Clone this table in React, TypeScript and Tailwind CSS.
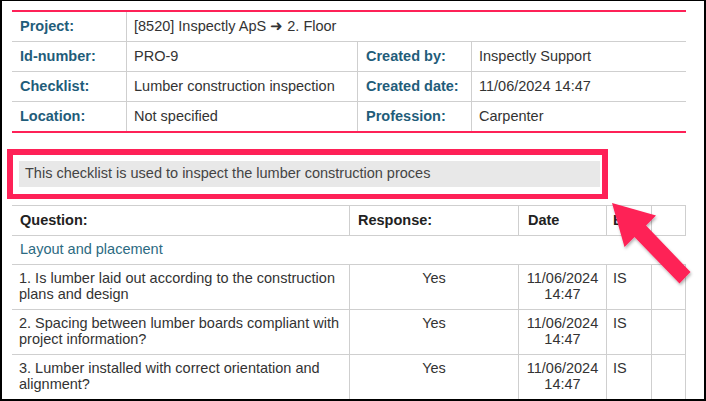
const infoRows = [
  { label: 'Id-number:', value: 'PRO-9', label2: 'Created by:', value2: 'Inspectly Support' },
  { label: 'Checklist:', value: 'Lumber construction inspection', label2: 'Created date:', value2: '11/06/2024 14:47' },
  { label: 'Location:', value: 'Not specified', label2: 'Profession:', value2: 'Carpenter' },
];

const questions = [
  ['1. Is lumber laid out according to the construction', 'plans and design'],
  ['2. Spacing between lumber boards compliant with', 'project information?'],
  ['3. Lumber installed with correct orientation and', 'alignment?'],
];

function Arrow() {
  return (
    <svg
      className="pointer-events-none absolute left-0 top-0"
      width="706"
      height="401"
      viewBox="0 0 706 401"
    >
      <defs>
        <filter id="shadow" x="-20%" y="-20%" width="140%" height="140%">
          <feDropShadow dx="1" dy="2" stdDeviation="1.5" floodColor="#000" floodOpacity="0.3" />
        </filter>
      </defs>
      <polygon
        points="610,202 654,214.5 644,224.5 688.5,271 677.5,282.5 632.5,236 622.5,246"
        fill="#fe2157"
        filter="url(#shadow)"
      />
    </svg>
  );
}

export default function App() {
  return (
    <div
      className="relative h-[401px] w-[706px] overflow-hidden border-b-2 border-l-2 border-r-2 border-t border-black bg-white"
      style={{ fontFamily: '"Liberation Sans", Arial, sans-serif' }}
    >
      <div className="pl-[10px] pt-[9px] text-[14.5px] text-[#333]">
        {/* info table */}
        <div className="w-[674px] border-b-2 border-t-2 border-[#fe2157]">
          <div className="flex h-[30px] border-b border-[#cfcfcf]">
            <div className="flex w-[115px] items-center border-r border-[#cfcfcf] pl-2 font-bold text-[#1f5d7a]">
              Project:
            </div>
            <div className="flex flex-1 items-center pl-[7px]">[8520] Inspectly ApS ➜ 2. Floor</div>
          </div>
          {infoRows.map((row, i) => (
            <div
              key={row.label}
              className={`flex h-[29px] ${i < infoRows.length - 1 ? 'h-[30px] border-b border-[#cfcfcf]' : ''}`}
            >
              <div className="flex w-[115px] items-center border-r border-[#cfcfcf] pl-2 font-bold text-[#1f5d7a]">
                {row.label}
              </div>
              <div className="flex w-[231px] items-center border-r border-[#cfcfcf] pl-[7px]">{row.value}</div>
              <div className="flex w-[114px] items-center border-r border-[#cfcfcf] pl-[8px] font-bold text-[#1f5d7a]">
                {row.label2}
              </div>
              <div className="flex flex-1 items-center pl-[7px]">{row.value2}</div>
            </div>
          ))}
        </div>

        {/* description, highlighted */}
        <div className="ml-[-5px] mt-[16px] w-[601px] border-[6px] border-b-[5px] border-r-[6px] border-[#fe2157] pb-[7px] pl-[6px] pr-[2px] pt-[6px]">
          <div className="flex h-[26px] items-center bg-[#e8e8e8] pl-[6px] text-[#444]">
            This checklist is used to inspect the lumber construction proces
          </div>
        </div>

        {/* questions table */}
        <div className="mt-[6px] w-[674px] border-t border-[#cfcfcf]">
          <div className="flex h-[30px] border-b border-[#cfcfcf] font-bold text-[#222]">
            <div className="flex w-[338px] items-center border-r border-[#cfcfcf] pl-2">Question:</div>
            <div className="flex w-[169px] items-center border-r border-[#cfcfcf] pl-2">Response:</div>
            <div className="flex w-[88px] items-center border-r border-[#cfcfcf] pl-[9px]">Date</div>
            <div className="flex w-[45px] items-center border-r border-[#cfcfcf] pl-[6px]">By</div>
            <div className="w-[34px] border-r border-[#cfcfcf]" />
          </div>
          <div className="flex h-[29px] items-center border-b border-[#cfcfcf] pl-2 text-[#2c6a82]">
            Layout and placement
          </div>
          {questions.map((q) => (
            <div key={q[0]} className="flex h-[45px] border-b border-[#cfcfcf] leading-[16px]">
              <div className="w-[338px] border-r border-[#cfcfcf] pl-[7px] pt-[5px]">
                {q[0]}
                <br />
                {q[1]}
              </div>
              <div className="w-[169px] border-r border-[#cfcfcf] pt-[5px] text-center">Yes</div>
              <div className="w-[88px] border-r border-[#cfcfcf] pt-[5px] text-center">
                11/06/2024
                <br />
                14:47
              </div>
              <div className="w-[45px] border-r border-[#cfcfcf] pl-[6px] pt-[5px]">IS</div>
              <div className="w-[34px] border-r border-[#cfcfcf]" />
            </div>
          ))}
        </div>
      </div>
      <Arrow />
    </div>
  );
}
